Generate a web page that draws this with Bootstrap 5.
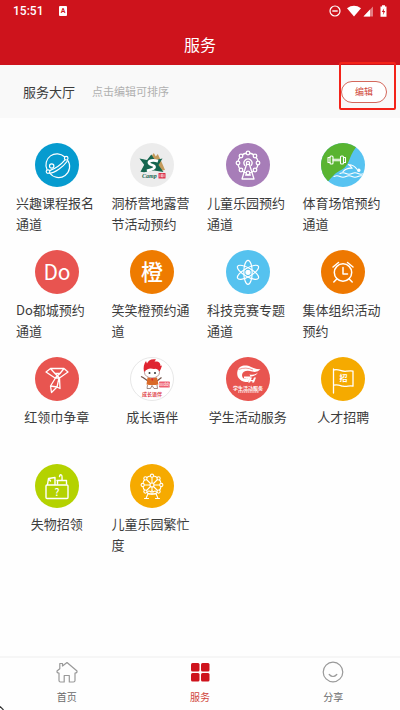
<!DOCTYPE html>
<html lang="zh-CN">
<head>
<meta charset="utf-8">
<meta name="viewport" content="width=device-width, initial-scale=1">
<title>服务</title>
<link href="https://cdn.jsdelivr.net/npm/bootstrap@5.3.0/dist/css/bootstrap.min.css" rel="stylesheet">
<style>
  body { font-family: "Noto Sans CJK SC", sans-serif; color: #3c3c3c; font-size: 13px; line-height: 21px; background: #fefefe; }
  svg { display: block; flex: none; }
  .app-top { background: #ce131c; color: #fff; }
  .status-line { height: 22px; padding: 0 12px 0 13px; font-family: Roboto, sans-serif; font-size: 12px; font-weight: 500; }
  .app-title { height: 43px; font-size: 16px; line-height: 24px; font-weight: 400; }
  .hall-bar { background: #f9f9f9; height: 53px; padding: 0 13px 0 23px; }
  .hall-hint { color: #b0b0b0; font-size: 11px; margin-left: 17px; }
  .edit-btn { width: 46px; height: 22px; padding: 0; border: 1px solid #d4685c; border-radius: 11px; background: #fff; color: #cf4637; font-size: 9px; line-height: 12px; }
  .edit-frame { position: absolute; top: -3px; right: 4px; width: 57px; height: 48px; border: 2px solid #f3231a; border-radius: 2px; pointer-events: none; }
  .service-grid { padding: 25px 9px 0; row-gap: 16px; }
  .service-tile { min-height: 91px; padding: 0 7px; gap: 5px; color: #3c3c3c; }
  .app-tabs { border-top: 2px solid #f6f6f6; height: 54px; font-size: 10px; line-height: 16px; }
  .app-tabs a { color: #6a6a6a; padding-top: 3px; gap: 6px; }
  .app-tabs a.active { color: #d0453c; }
  .line-art { fill: none; stroke: #fff; stroke-linecap: round; stroke-linejoin: round; }
  .pointer-tip { position: absolute; left: 0; bottom: 0; }
</style>
<script src="https://cdn.jsdelivr.net/npm/bootstrap@5.3.0/dist/js/bootstrap.bundle.min.js"></script>
</head>
<body>
<div class="d-flex flex-column min-vh-100 position-relative">
  <header class="app-top">
    <div class="status-line d-flex align-items-center">
      <span>15:51</span>
      <svg class="ms-3" width="9" height="10" viewBox="0 0 9 10" aria-hidden="true"><rect width="8" height="10" rx="1" fill="#fff"/><text x="4" y="7" text-anchor="middle" font-size="7" font-weight="700" fill="#ce131c">A</text></svg>
      <svg class="ms-auto" width="59" height="14" viewBox="0 0 59 14" aria-hidden="true">
        <circle cx="6" cy="7" r="5" fill="none" stroke="#fff" stroke-width="1.2"/><path d="M3.3 7h5.4" stroke="#fff" stroke-width="1.4"/>
        <path d="M18 4.2Q25 -.5 32 4.2L25 12.5Z" fill="#fff"/>
        <path d="M44 2.5V12.500H34.500Z" fill="#fff" opacity=".45"/><path d="M41 5.600V12.500H34.500Z" fill="#fff"/>
        <path d="M53 1.200h3v1.300h1.500v10.300h-6V2.500H53Z" fill="#fff"/><path d="M55.200 4.200L52.800 8h1.600l-.5 3 2.300-4h-1.500Z" fill="#ce131c"/>
      </svg>
    </div>
    <h1 class="app-title d-flex align-items-center justify-content-center mb-0">服务</h1>
  </header>

  <section class="hall-bar d-flex align-items-center position-relative">
    <span>服务大厅</span><span class="hall-hint">点击编辑可排序</span>
    <button type="button" class="edit-btn btn ms-auto">编辑</button>
    <div class="edit-frame"></div>
  </section>

  <main class="service-grid row row-cols-4 g-0 flex-grow-1 align-content-start">
    <div class="col"><a href="#" class="service-tile d-flex flex-column align-items-center text-decoration-none">
      <svg width="44" height="44" viewBox="0 0 44 44" aria-hidden="true"><circle cx="22" cy="22" r="22" fill="#069bcf"/>
        <g class="line-art" stroke-width="1.200"><path d="M29.500 13.800A11 11 0 0 0 12 26.500M14.700 30A11 11 0 0 0 32.500 17"/><circle cx="16.700" cy="23" r="2.200"/><circle cx="31.200" cy="15.200" r="1.800"/><circle cx="13" cy="28.600" r="1.800"/><path d="M14.700 30.200C20 30 28 24 32 18.500M14.700 27.600Q24 24 30 16.800"/></g></svg>
      <span>兴趣课程报名通道</span></a></div>
    <div class="col"><a href="#" class="service-tile d-flex flex-column align-items-center text-decoration-none">
      <svg width="44" height="44" viewBox="0 0 44 44" aria-hidden="true"><circle cx="22" cy="22" r="22" fill="#ececec"/>
        <path d="M18 18L23.800 10l2 3.500 2-2.500L32 20l3 7-6 1Z" fill="#c49b5c"/>
        <path d="M9.500 15.500L17 17l4.300-5.500L25 17l7.500-1.500L28.500 22l5 7L24 27.500l-10 1.700-3.500-.4 3.700-7Z" fill="#16664f"/>
        <path d="M28 18.200C23 16.500 18.500 17.500 19 20c.5 2.300 6 1.800 5.500 4.200-.4 2-4.500 2.800-7.500 3.800" fill="none" stroke="#fff" stroke-width="2.800"/>
        <text x="12" y="35" font-family="Liberation Serif, serif" font-size="6" font-style="italic" font-weight="700" fill="#16664f">Camp</text><rect x="28.500" y="30" width="7" height="5.500" rx=".6" fill="#dc3148"/><path d="M30 31.200v3M31.500 31.200h1.200v2.800h-1.200ZM34 31.200v3" fill="none" stroke="#fff" stroke-width=".6"/></svg>
      <span>洞桥营地露营节活动预约</span></a></div>
    <div class="col"><a href="#" class="service-tile d-flex flex-column align-items-center text-decoration-none">
      <svg width="44" height="44" viewBox="0 0 44 44" aria-hidden="true"><circle cx="22" cy="22" r="22" fill="#a77db8"/>
        <g class="line-art" stroke-width="1.300"><circle cx="22" cy="20" r="10"/><g fill="#a77db8"><circle cx="22" cy="10" r="1.800"/><circle cx="29" cy="13" r="1.800"/><circle cx="32" cy="20" r="1.800"/><circle cx="29" cy="27" r="1.800"/><circle cx="22" cy="30" r="1.800"/><circle cx="15" cy="27" r="1.800"/><circle cx="12" cy="20" r="1.800"/><circle cx="15" cy="13" r="1.800"/></g><path d="M20.500 21.500L16 36h12l-4.500-14.500M19.500 32h5" /><path d="M18.700 22.300a4 4 0 1 1 6.600 0"/><circle cx="22" cy="20" r="1.600"/></g></svg>
      <span>儿童乐园预约通道</span></a></div>
    <div class="col"><a href="#" class="service-tile d-flex flex-column align-items-center text-decoration-none">
      <svg width="44" height="44" viewBox="0 0 44 44" aria-hidden="true"><defs><clipPath id="disc"><circle cx="22" cy="22" r="22"/></clipPath></defs><g clip-path="url(#disc)"><rect width="44" height="44" fill="#57c3f1"/><path d="M0 0H38L35 4.300C27 15 29 22 21 26.500C14 30 13 32 7.200 38.200L0 44Z" fill="#59b431"/>
        <g class="line-art" stroke-width="1.100"><rect x="9" y="13" width="3" height="8" rx="1"/><rect x="19.500" y="13" width="3" height="8" rx="1"/><path d="M9 14.500H7v5h2M22.500 14.500h2v5h-2M12 16.300h7.500M12 17.700h7.500"/><path d="M27.500 21.500Q33 22 36 26.200M27.500 21.500Q30 23.500 31.200 25.200Q26 24.500 22 28.600"/><circle cx="37.800" cy="27.300" r="1.200" fill="#fff"/><path d="M19 30.500q3-1.500 6 0t6 0t6 0t6 0M13 33.500q3-1.500 6 0t6 0t6 0t6 0t6 0"/></g></g></svg>
      <span>体育场馆预约通道</span></a></div>

    <div class="col"><a href="#" class="service-tile d-flex flex-column align-items-center text-decoration-none">
      <svg width="44" height="44" viewBox="0 0 44 44" aria-hidden="true"><circle cx="22" cy="22" r="22" fill="#e85450"/><text x="22" y="30" text-anchor="middle" font-size="21" fill="#fff">Do</text></svg>
      <span>Do都城预约通道</span></a></div>
    <div class="col"><a href="#" class="service-tile d-flex flex-column align-items-center text-decoration-none">
      <svg width="44" height="44" viewBox="0 0 44 44" aria-hidden="true"><circle cx="22" cy="22" r="22" fill="#ee7b00"/><text x="22" y="30" text-anchor="middle" font-size="22" font-weight="500" fill="#fff">橙</text></svg>
      <span>笑笑橙预约通道</span></a></div>
    <div class="col"><a href="#" class="service-tile d-flex flex-column align-items-center text-decoration-none">
      <svg width="44" height="44" viewBox="0 0 44 44" aria-hidden="true"><circle cx="22" cy="22" r="22" fill="#55c2ef"/>
        <g class="line-art" stroke-width="1.200"><ellipse cx="22" cy="22.300" rx="4.200" ry="12"/><ellipse cx="22" cy="22.300" rx="4.200" ry="12" transform="rotate(60 22 22.300)"/><ellipse cx="22" cy="22.300" rx="4.200" ry="12" transform="rotate(120 22 22.300)"/><circle cx="22" cy="22.300" r="2" fill="#fff"/></g></svg>
      <span>科技竞赛专题通道</span></a></div>
    <div class="col"><a href="#" class="service-tile d-flex flex-column align-items-center text-decoration-none">
      <svg width="44" height="44" viewBox="0 0 44 44" aria-hidden="true"><circle cx="22" cy="22" r="22" fill="#ee7800"/>
        <g class="line-art" stroke-width="1.500"><circle cx="22" cy="22.500" r="8.700"/><path d="M22 17.500v6.500h4.500M15.800 29l-3 3M28.200 29l3 3M12 17l5.500-4.500M32 17l-5.500-4.500"/></g></svg>
      <span>集体组织活动预约</span></a></div>

    <div class="col"><a href="#" class="service-tile d-flex flex-column align-items-center text-decoration-none">
      <svg width="44" height="44" viewBox="0 0 44 44" aria-hidden="true"><circle cx="22" cy="22" r="22" fill="#e85550"/>
        <g class="line-art" stroke-width="1.300"><path d="M11 15l4.500-3.500h13.500l4 3.500-8.500 6h-4.500ZM15.500 11.500l4.500 5h5l4-5M20 16.500l4.500 4.500M25 16.500l-5 4.500M20.500 21L15.500 29l1 6.500 5.500-5.500 2-9M24.500 21l.5 10.500-3-1.500M15.500 29l6.500 1"/></g></svg>
      <span>红领巾争章</span></a></div>
    <div class="col"><a href="#" class="service-tile d-flex flex-column align-items-center text-decoration-none">
      <svg width="44" height="44" viewBox="0 0 44 44" aria-hidden="true"><circle cx="22" cy="22" r="21.500" fill="#fff" stroke="#e7e7e7"/>
        <path d="M18 24l-5-3.500-2-1M27 24l4.500-3.500" fill="none" stroke="#6e5048" stroke-width="1.200"/>
        <ellipse cx="22" cy="15.500" rx="7.500" ry="5.500" fill="#fff" stroke="#8d5550" stroke-width=".6"/>
        <path d="M14 15c-1-5 0-8 2-11l1 2.500C18 4 21 1.500 26 2.500L24.500 4.500C29 4 30.500 6 30.500 9L32 8.500Q31 12 29.500 14.500Q28 11 24 12Q18 10 14 15Z" fill="#df2430"/>
        <circle cx="19.500" cy="16" r="1" fill="#333"/><circle cx="25" cy="16" r="1" fill="#333"/>
        <path d="M17.500 20.500l4.500 1 5-1 1.500 7-6 1-6-1Z" fill="#d96a28"/><path d="M21 21.200l1.200 3 1.500-3Z" fill="#e4202c"/><path d="M17.500 28l-.5 3.500h3.500l1.500-3 2 3h3.500l-.5-3.500" fill="#fff" stroke="#795a51" stroke-width=".7"/>
        <rect x="29" y="24.500" width="11" height="6" rx="1" fill="#ee6072"/><text x="34.500" y="29" font-size="4" text-anchor="middle" fill="#fff">Buddy</text>
        <text x="22" y="39" font-size="5" font-weight="700" text-anchor="middle" fill="#e0454c">成长语伴</text></svg>
      <span>成长语伴</span></a></div>
    <div class="col"><a href="#" class="service-tile d-flex flex-column align-items-center text-decoration-none">
      <svg width="44" height="44" viewBox="0 0 44 44" aria-hidden="true"><circle cx="22" cy="22" r="22" fill="#e85550"/>
        <path d="M22 25C14 25 10 20 11.500 14C13 8 20 7.500 25 10Q30 12.500 34.500 12.300Q31 16 26 14.500C21 13 16.500 14 16 18C16 21.500 18.500 22.500 21 21Z" fill="#fff"/><path d="M12.500 12.500Q20 9.500 27 13" fill="none" stroke="#e85550" stroke-width=".6"/><path d="M18 19.500h7l-3 5.500h-2.500l2-3.500H18Z" fill="#fff"/><path d="M23.500 17.500Q29 18.500 32 15.500Q30 19 24.500 19.800ZM24 20.500h2l-1 2.500h2l1-2.500h2l-2 5h-2l.5-1.300h-2L24 25.500h-2Z" fill="#fff"/>
        <text x="22" y="32.500" font-size="5" font-weight="700" text-anchor="middle" fill="#fff">学生活动服务</text><path d="M12 35h21" stroke="#fff" stroke-width="1" stroke-dasharray="1.500 .4"/></svg>
      <span>学生活动服务</span></a></div>
    <div class="col"><a href="#" class="service-tile d-flex flex-column align-items-center text-decoration-none">
      <svg width="44" height="44" viewBox="0 0 44 44" aria-hidden="true"><circle cx="22" cy="22" r="22" fill="#f5aa00"/>
        <path class="line-art" stroke-width="1.300" d="M12.500 36V12M12.500 13c6-1.500 7 2 13 1.200 3-.4 5-.7 6.500 0v15c-4-1-6 1-10 0s-5-2-9.500-1"/><text x="22.500" y="24" font-size="8" font-weight="700" text-anchor="middle" fill="#fff">招</text></svg>
      <span>人才招聘</span></a></div>

    <div class="col"><a href="#" class="service-tile d-flex flex-column align-items-center text-decoration-none">
      <svg width="44" height="44" viewBox="0 0 44 44" aria-hidden="true"><circle cx="22" cy="22" r="22" fill="#b4d200"/>
        <g class="line-art" stroke-width="1.400"><rect x="11" y="21" width="22" height="13.500" rx="1"/><path d="M12.500 20.500l1-6 6.500-1v7M14 15l1.500 2M22 16.500h9.500v3.500M22.500 16.500v3.500M24.500 12.500q.5-2.500 2-1.500.8.500.5 5.500"/></g><text x="22" y="31.500" font-size="10" font-weight="500" text-anchor="middle" fill="#fff">?</text></svg>
      <span>失物招领</span></a></div>
    <div class="col"><a href="#" class="service-tile d-flex flex-column align-items-center text-decoration-none">
      <svg width="44" height="44" viewBox="0 0 44 44" aria-hidden="true"><circle cx="22" cy="22" r="22" fill="#f6aa00"/>
        <g class="line-art" stroke-width="1.100"><circle cx="22" cy="21" r="9.200"/><path d="M22 12v18M13 21h18M15.500 14.500l13 13M28.500 14.500l-13 13"/><g fill="#f6aa00"><circle cx="22" cy="11.700" r="1.600"/><circle cx="28.600" cy="14.400" r="1.600"/><circle cx="31.300" cy="21" r="1.600"/><circle cx="28.600" cy="27.600" r="1.600"/><circle cx="15.400" cy="27.600" r="1.600"/><circle cx="12.700" cy="21" r="1.600"/><circle cx="15.400" cy="14.400" r="1.600"/><circle cx="22" cy="21" r="2"/></g><path d="M17.500 28q1.500-2 3 0q1.500-2 3 0q1.500-2 3 0M18 29.500l-2 5M26 29.500l2 5M14.500 34.500h4M25.500 34.500h4M18 30h8"/></g></svg>
      <span>儿童乐园繁忙度</span></a></div>
  </main>

  <nav class="app-tabs row row-cols-3 g-0 text-center">
    <a href="#" class="col d-flex flex-column align-items-center text-decoration-none">
      <svg width="22" height="22" viewBox="0 0 22 22" aria-hidden="true"><path d="M11 1.500L6.500 5V2.500H3.800v5.200L1 10q-.3 2 2 2v7.500q0 1.500 1.500 1.500h3.700v-6.500h5.100V21h4q1.700 0 1.700-1.500V12q2.300 0 2-2Z" fill="none" stroke="#999" stroke-width="1.200" stroke-linejoin="round"/></svg>
      <span>首页</span></a>
    <a href="#" class="active col d-flex flex-column align-items-center text-decoration-none" aria-current="page">
      <svg width="22" height="22" viewBox="0 0 22 22" fill="#ce131c" aria-hidden="true"><rect x="2" y="2" width="8.500" height="8.500" rx="1.500"/><rect x="12" y="2" width="8.500" height="8.500" rx="1.500"/><rect x="2" y="12" width="8.500" height="8.500" rx="1.500"/><rect x="12" y="12" width="8.500" height="8.500" rx="1.500"/></svg>
      <span>服务</span></a>
    <a href="#" class="col d-flex flex-column align-items-center text-decoration-none">
      <svg width="22" height="22" viewBox="0 0 22 22" fill="none" stroke="#999" stroke-width="1.200" stroke-linecap="round" aria-hidden="true"><circle cx="11" cy="11" r="9.800"/><path d="M7.200 13.500q3.800 4 7.600 0"/></svg>
      <span>分享</span></a>
  </nav>
  <svg class="pointer-tip" width="4" height="4" viewBox="0 0 4 4" aria-hidden="true"><path d="M0 .5L3.500 4" stroke="#333" stroke-width="1.200"/></svg>
</div>
</body>
</html>
